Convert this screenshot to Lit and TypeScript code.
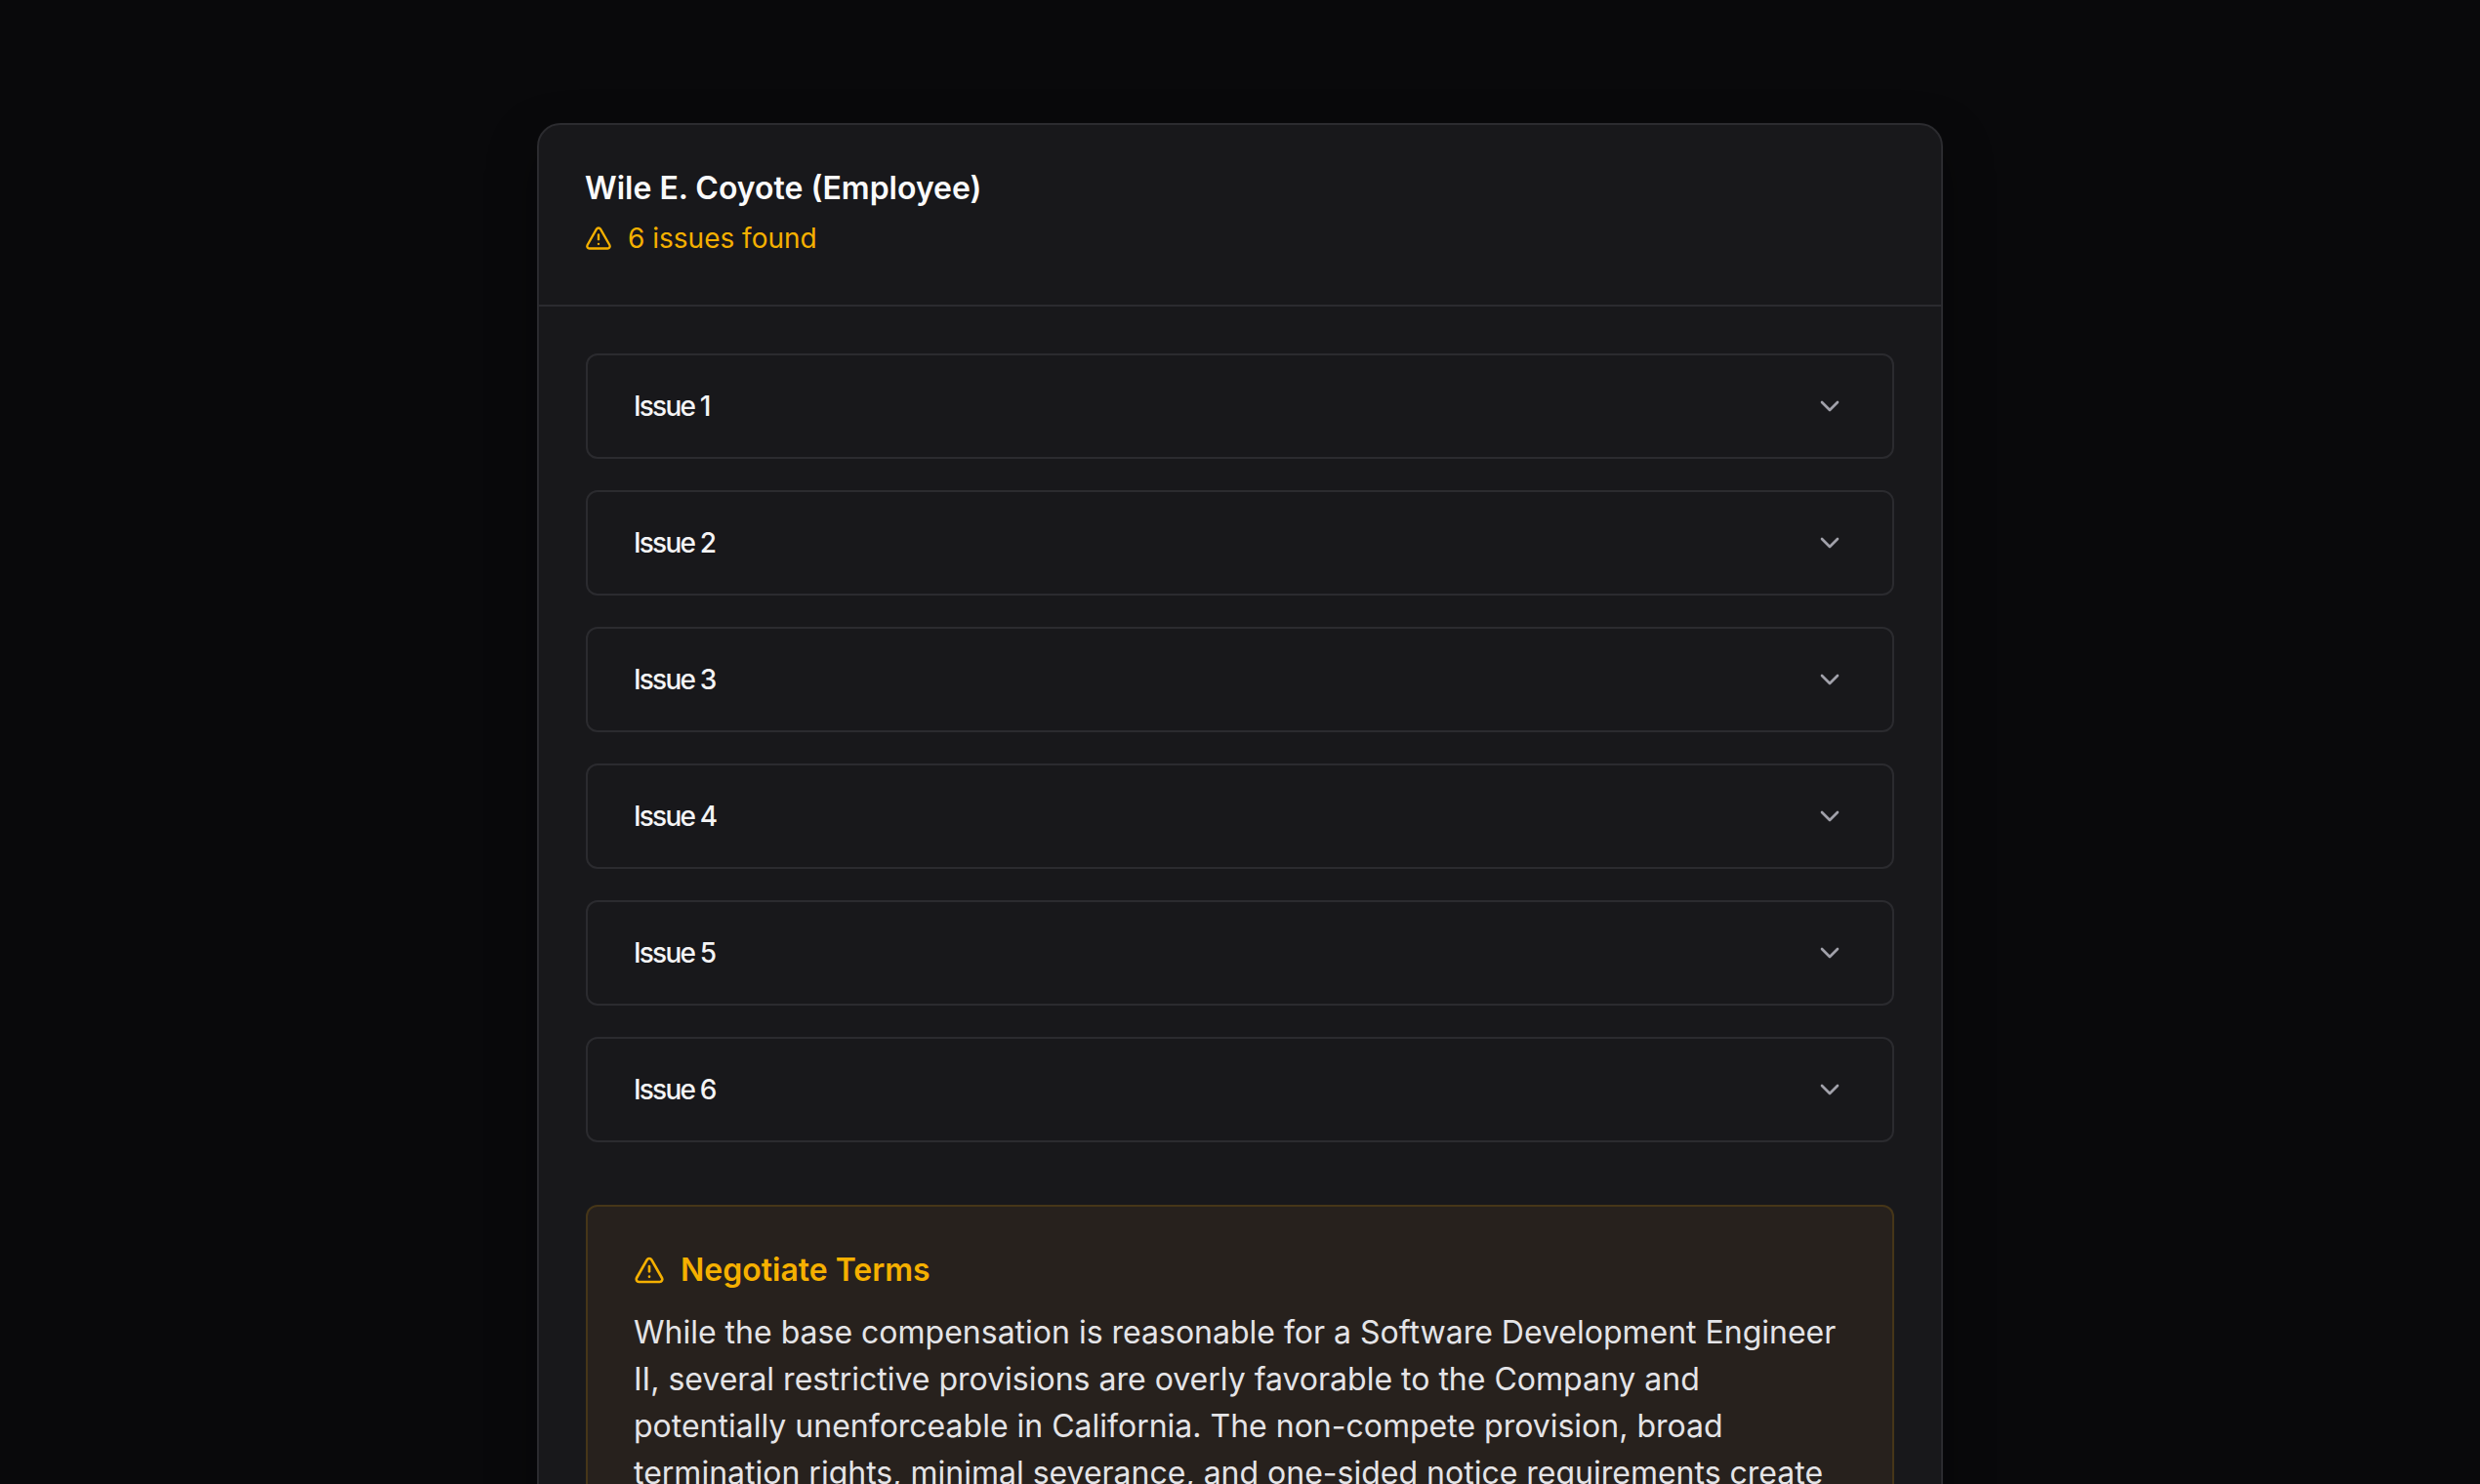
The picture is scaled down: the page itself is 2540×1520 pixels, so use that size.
import { LitElement, html, css, svg } from 'lit';
import { customElement } from 'lit/decorators.js';

const alertIcon = (cls: string) => html`<svg class=${cls} viewBox="0 0 24 24" fill="none" stroke="currentColor" stroke-width="2" stroke-linecap="round" stroke-linejoin="round">
  ${svg`<path d="m21.73 18-8-14a2 2 0 0 0-3.48 0l-8 14A2 2 0 0 0 4 21h16a2 2 0 0 0 1.73-3" /><path d="M12 9v4" /><path d="M12 17h.01" />`}
</svg>`;

const chevron = html`<svg class="chevron" viewBox="0 0 24 24" fill="none" stroke="currentColor" stroke-width="2" stroke-linecap="round" stroke-linejoin="round">
  ${svg`<path d="m6 9 6 6 6-6" />`}
</svg>`;

const ISSUES = ['Issue 1', 'Issue 2', 'Issue 3', 'Issue 4', 'Issue 5', 'Issue 6'];

@customElement('app-root')
export class AppRoot extends LitElement {
  static styles = css`
    :host {
      display: block;
      height: 1520px;
      overflow: hidden;
      background: #09090b;
      font-family: Inter, "Liberation Sans", sans-serif;
      color: #fafafa;
    }

    .page {
      display: flex;
      justify-content: center;
      padding-top: 126px;
    }

    .card {
      width: 1440px;
      box-sizing: border-box;
      background: #18181b;
      border: 2px solid #2b2b2f;
      border-radius: 24px;
      box-shadow: 0 20px 50px rgba(0, 0, 0, 0.35);
    }

    .card-header {
      padding: 47px 47px 48px;
      border-bottom: 2px solid #2b2b2f;
    }

    h1 {
      margin: 0;
      font-size: 32px;
      line-height: 36px;
      font-weight: 600;
    }

    .found {
      display: flex;
      align-items: center;
      gap: 16px;
      margin-top: 13px;
      font-size: 28px;
      line-height: 40px;
      color: #f5b000;
    }

    .found-icon {
      width: 28px;
      height: 28px;
    }

    .card-body {
      padding: 48px;
    }

    .issues {
      display: flex;
      flex-direction: column;
      gap: 32px;
    }

    .issue {
      display: flex;
      align-items: center;
      justify-content: space-between;
      height: 108px;
      box-sizing: border-box;
      padding: 0 48px 0 47px;
      border: 2px solid #2b2b2f;
      border-radius: 12px;
      font-size: 28px;
      font-weight: 500;
      letter-spacing: -1.8px;
      color: #f4f4f5;
    }

    .chevron {
      width: 32px;
      height: 32px;
      color: #a1a1aa;
    }

    .negotiate {
      margin-top: 64px;
      padding: 47px;
      border: 2px solid rgba(245, 176, 0, 0.15);
      border-radius: 12px;
      background: #27211d;
    }

    h2 {
      display: flex;
      align-items: center;
      gap: 16px;
      margin: 0 0 22px;
      font-size: 32px;
      line-height: 36px;
      font-weight: 600;
      color: #f5b000;
    }

    .negotiate-icon {
      width: 32px;
      height: 32px;
    }

    p {
      margin: 0;
      font-size: 32px;
      line-height: 48px;
      color: #e4e4e7;
    }
  `;

  render() {
    return html`
      <div class="page">
        <section class="card">
          <header class="card-header">
            <h1>Wile E. Coyote (Employee)</h1>
            <div class="found">${alertIcon('found-icon')}<span>6 issues found</span></div>
          </header>
          <div class="card-body">
            <div class="issues">
              ${ISSUES.map((name) => html`<div class="issue"><span>${name}</span>${chevron}</div>`)}
            </div>
            <div class="negotiate">
              <h2>${alertIcon('negotiate-icon')}<span>Negotiate Terms</span></h2>
              <p>While the base compensation is reasonable for a Software Development Engineer II, several restrictive provisions are overly favorable to the Company and potentially unenforceable in California. The non-compete provision, broad termination rights, minimal severance, and one-sided notice requirements create significant risk for the employee and should be negotiated before signing.</p>
            </div>
          </div>
        </section>
      </div>
    `;
  }
}
